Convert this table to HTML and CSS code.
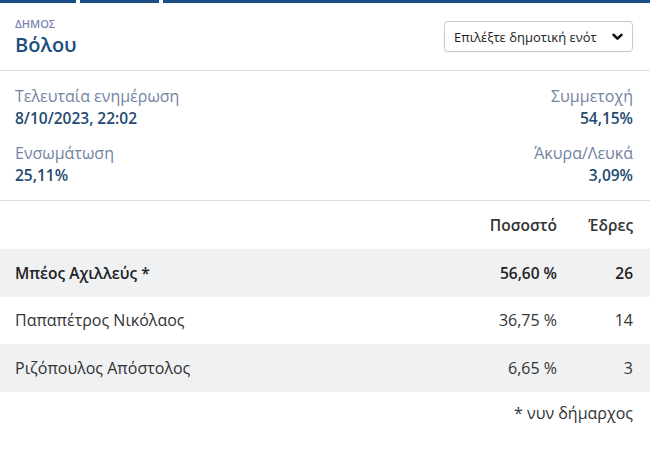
FILE: index.html
```html
<!DOCTYPE html>
<html lang="el">
<head>
<meta charset="utf-8">
<link rel="stylesheet" href="styles.css">
</head>
<body>
<div class="topbar">
  <span class="seg seg1"></span>
  <span class="seg seg2"></span>
  <span class="seg seg3"></span>
</div>
<header class="head">
  <div class="title">
    <div class="kicker">ΔΗΜΟΣ</div>
    <h1 class="name">Βόλου</h1>
  </div>
  <div class="select">
    <span class="select-text">Επιλέξτε δημοτική ενότ</span>
    <svg class="chev" width="11" height="8" viewBox="0 0 11 8"><path d="M1.6 1.8 L5.5 5.7 L9.4 1.8" fill="none" stroke="#111" stroke-width="2.6" stroke-linecap="round" stroke-linejoin="round"/></svg>
  </div>
</header>
<section class="stats">
  <div class="stat">
    <div class="label">Τελευταία ενημέρωση</div>
    <div class="value">8/10/2023, 22:02</div>
  </div>
  <div class="stat right">
    <div class="label">Συμμετοχή</div>
    <div class="value">54,15%</div>
  </div>
  <div class="stat">
    <div class="label">Ενσωμάτωση</div>
    <div class="value">25,11%</div>
  </div>
  <div class="stat right">
    <div class="label">Άκυρα/Λευκά</div>
    <div class="value">3,09%</div>
  </div>
</section>
<section class="results">
  <div class="row header">
    <span class="cand"></span>
    <span class="pct">Ποσοστό</span>
    <span class="seats">Έδρες</span>
  </div>
  <div class="row shade strong">
    <span class="cand">Μπέος Αχιλλεύς *</span>
    <span class="pct">56,60 %</span>
    <span class="seats">26</span>
  </div>
  <div class="row">
    <span class="cand">Παπαπέτρος Νικόλαος</span>
    <span class="pct">36,75 %</span>
    <span class="seats">14</span>
  </div>
  <div class="row shade">
    <span class="cand">Ριζόπουλος Απόστολος</span>
    <span class="pct">6,65 %</span>
    <span class="seats">3</span>
  </div>
  <div class="note">* νυν δήμαρχος</div>
</section>
</body>
</html>
```
FILE: styles.css
```css
* { box-sizing: border-box; }
html, body { margin: 0; padding: 0; background: #fff; }
body {
  font-family: "Open Sans", "Noto Sans", sans-serif;
  color: #333;
  width: 650px;
}
.topbar {
  display: flex;
  gap: 4px;
  height: 3px;
}
.seg { background: #1b4d86; height: 3px; }
.seg1 { width: 76px; }
.seg2 { width: 79px; }
.seg3 { flex: 1; }

.head {
  display: flex;
  justify-content: space-between;
  align-items: flex-start;
  padding: 14px 17px 0 15px;
  height: 68px;
  border-bottom: 1px solid #dedede;
}
.kicker {
  font-size: 11px;
  font-weight: 600;
  color: #7b86b3;
  line-height: 14px;
}
.name {
  margin: 0;
  font-size: 20px;
  font-weight: 600;
  color: #1c4d80;
  line-height: 27px;
}
.select {
  margin-top: 4px;
  width: 189px;
  height: 31px;
  border: 1px solid #c9c9c9;
  border-radius: 4px;
  display: flex;
  align-items: center;
  justify-content: space-between;
  padding: 0 9px 0 9px;
  box-shadow: 0 1px 1px rgba(0,0,0,0.04);
}
.select-text { font-size: 13px; color: #222; white-space: nowrap; }
.chev { display: block; }

.stats {
  display: grid;
  grid-template-columns: 1fr 1fr;
  align-content: start;
  row-gap: 13px;
  padding: 14px 17px 0 15px;
  height: 130px;
  border-bottom: 1px solid #dedede;
}
.stat.right { text-align: right; }
.label {
  font-size: 16px;
  color: #7383a3;
  line-height: 22px;
}
.value {
  font-size: 15.5px;
  font-weight: 600;
  color: #244a70;
  line-height: 22px;
}

.row {
  display: flex;
  align-items: center;
  height: 47.5px;
  padding: 0 17px 0 15px;
  font-size: 16px;
  color: #333;
}
.row.header {
  height: 48px;
  font-size: 15.5px;
  font-weight: 600;
  color: #333;
}
.row.shade { background: #f0f1f3; }
.row.strong { font-weight: 600; font-size: 15.5px; color: #222; }
.cand { flex: 1; }
.pct { width: 100px; text-align: right; }
.seats { width: 76px; text-align: right; }
.note {
  text-align: right;
  padding: 10px 17px 0 0;
  font-size: 16px;
  color: #333;
}
```
